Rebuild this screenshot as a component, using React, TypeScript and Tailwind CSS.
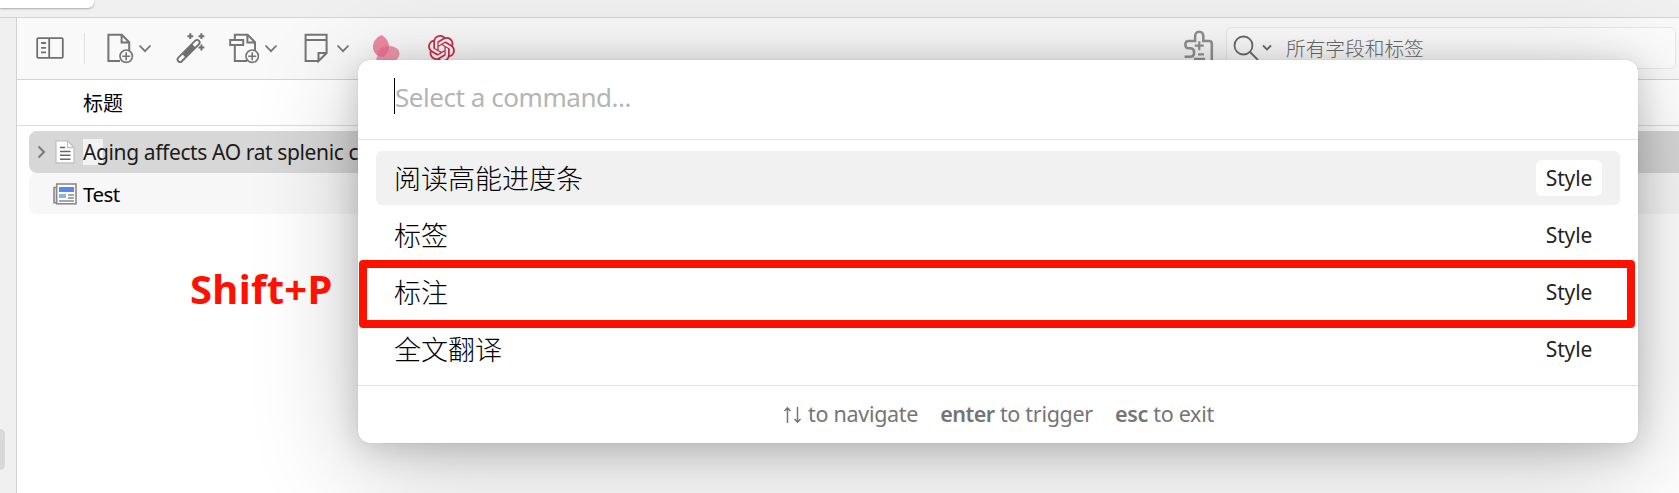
import React from "react";
import { SiOpenai } from "react-icons/si";

const Chevron = ({ className }: { className: string }) => (
  <svg className={className} width="14" height="32" viewBox="0 0 14 32" fill="none" stroke="#757575" strokeWidth="1.8">
    <path d="M1.5 12.5 7 18.2l5.5-5.7" />
  </svg>
);

const PlusBadge = ({ cx, cy }: { cx: number; cy: number }) => (
  <g strokeWidth="1.6">
    <circle cx={cx} cy={cy} r="6.2" fill="#f9f9f9" />
    <path d={`M${cx - 4} ${cy}h8M${cx} ${cy - 4}v8`} />
  </g>
);

const SidebarIcon = () => (
  <svg className="ml-[19px]" width="28" height="32" viewBox="0 0 28 32" fill="none" stroke="#707070" strokeWidth="1.8">
    <rect x="1.2" y="5.2" width="25.6" height="19.6" rx="1" />
    <path d="M13.2 5.5v19M5 10h5M5 14.8h5M5 19.4h5" />
  </svg>
);

const NewItemIcon = () => (
  <svg className="ml-[22px]" width="28" height="32" viewBox="0 0 28 32" fill="none" stroke="#757575" strokeWidth="2">
    <path d="M13 28H1.4V1.8h13.4l7.4 7.4V20M14.6 2v7.4h7.6" />
    <PlusBadge cx={19.2} cy={23.2} />
  </svg>
);

const WandIcon = () => (
  <svg className="ml-[24px]" width="32" height="32" viewBox="0 0 32 32" fill="none" stroke="#707070">
    <g transform="rotate(-45 12.5 18.2)">
      <rect x="-1.8" y="15.6" width="29" height="5" rx="2.5" strokeWidth="1.8" fill="#fafafa" />
      <rect x="6" y="15.6" width="14" height="5" fill="#707070" stroke="none" />
    </g>
    <path strokeWidth="2" d="M14.3 .3v5.8M11.4 3.2h5.8M25.4 .3v5.8M22.5 3.2h5.8M25.4 11.6v5.8M22.5 14.5h5.8" />
  </svg>
);

const AttachIcon = () => (
  <svg className="ml-[21px]" width="32" height="32" viewBox="0 0 32 32" fill="none" stroke="#757575" strokeWidth="2">
    <path d="M5.8 7V1.8h12.8l7.4 7.4V20M18.4 2v7.4H26M18 28H5.8V12.4" />
    <rect x="1.2" y="7" width="13" height="5" />
    <PlusBadge cx={23.2} cy={23.2} />
  </svg>
);

const NoteIcon = () => (
  <svg className="ml-[26px]" width="26" height="32" viewBox="0 0 26 32" fill="none" stroke="#757575" strokeWidth="2">
    <path d="M14.5 28H1.6V1.8h21V20L14.5 28v-8h8M1.6 7h21" />
  </svg>
);

const ButterflyIcon = () => (
  <svg className="ml-[22px]" width="30" height="32" viewBox="0 0 30 32" fill="#ee6f90">
    <path fillOpacity=".8" d="M9.500 2c5 3 8 8 7.500 13-.5 5-4 9-7 9-4 0-8.500-4-9-9C.5 9 4.500 4 9.500 2Z" />
    <path fillOpacity=".7" d="M6 18c3-4 7-5.500 12-5 6 .6 10 4 9.500 8C27 26 22 30 15 30c-6 0-9-2-11-4 2-2 1.500-5 2-8Z" />
  </svg>
);

const PuzzleIcon = () => (
  <svg width="32" height="34" viewBox="0 0 32 34" fill="none" stroke="#929292" strokeWidth="2.600">
    <path d="M0 26.700h5.500c2.500 0 4-1.700 4-4.200s-1.500-4.200-4-4.200H4c-2 0-3.200-1.200-3.200-3.200v-1C.800 12 2 11 4 11h6.500V6.500C10.500 3.500 12 1.800 14.500 1.800s4.200 1.700 4.200 4.700V11h5.800c1.700 0 2.700 1 2.700 2.700V34" transform="translate(.6 0)" />
    <path strokeWidth="2.200" d="M10.800 15.600h9M15.300 11.200v9M14 24.300h6M10 28.800h11" />
  </svg>
);

const commands = [
  { name: "阅读高能进度条", tag: "Style", active: true },
  { name: "标签", tag: "Style", active: false },
  { name: "标注", tag: "Style", active: false },
  { name: "全文翻译", tag: "Style", active: false },
];

function Toolbar() {
  return (
    <div className="flex h-[62px] shrink-0 items-start border-b border-[#d2d2d2] bg-[#f9f9f9] pt-[15px]">
      <SidebarIcon />
      <div className="ml-[20px] h-[31px] w-px bg-[#e2e2e2]" />
      <NewItemIcon />
      <Chevron className="ml-[3px]" />
      <WandIcon />
      <AttachIcon />
      <Chevron className="ml-[3px]" />
      <NoteIcon />
      <Chevron className="ml-[6px]" />
      <ButterflyIcon />
      <SiOpenai className="mt-[2px] ml-[26px] text-[#c9304a]" size={27} />
      <div className="-mt-[3px] ml-auto">
        <PuzzleIcon />
      </div>
      <div className="-mt-[6px] mr-[3px] ml-[10px] flex h-[42px] w-[450px] items-start rounded-md border border-[#e8e8e8] bg-[#fcfcfc]">
        <svg className="mt-[7px] ml-[6px]" width="26" height="28" viewBox="0 0 26 28" fill="none" stroke="#6b6b6b" strokeWidth="1.8">
          <circle cx="10.500" cy="10.500" r="9" />
          <path d="m17 17 8 8" />
        </svg>
        <svg className="mt-[16px] ml-[3px]" width="10" height="8" viewBox="0 0 10 8" fill="none" stroke="#6b6b6b" strokeWidth="1.800">
          <path d="M1 1.500 5 5.500l4-4" />
        </svg>
        <span className="mt-[6px] ml-[14px] text-[19.700px] leading-[30px] font-light text-[#6a6a6a]">所有字段和标签</span>
      </div>
    </div>
  );
}

function Library() {
  return (
    <div className="flex min-w-0 flex-1 flex-col border-l border-[#d2d2d2] bg-white">
      <Toolbar />
      <div className="flex h-[46px] shrink-0 items-center border-b border-[#dcdcdc] pt-[2px] pl-[66px] text-[20px] text-black">标题</div>
      <div className="mt-[5px] ml-[12px] flex h-[42px] items-center rounded-l-lg bg-[#d7d7d7]">
        <svg className="ml-[8px]" width="10" height="14" viewBox="0 0 10 14" fill="none" stroke="#7a7a7a" strokeWidth="2">
          <path d="m1.500 1.500 5.500 5.500-5.500 5.500" />
        </svg>
        <svg className="ml-[8px]" width="20" height="24" viewBox="0 0 20 24" fill="none">
          <path d="M1 .8h11.500l6.500 6.500V23H1z" fill="#fff" stroke="#c2c2c2" strokeWidth="1.300" />
          <path d="M12.500 1v6.500H19" stroke="#c2c2c2" strokeWidth="1.300" />
          <path d="M5 7.500h5M5 11.500h10.500M5 15.300h10.500M5 19.200h10.500" stroke="#666" strokeWidth="1.600" />
        </svg>
        <span className="ml-[8px] bg-[linear-gradient(#f3f3f3,#f3f3f3)] bg-[length:20px_26px] bg-left bg-no-repeat text-[21px] leading-[28px] tracking-[-0.38px] whitespace-nowrap text-[#1c1c1c]">
          Aging affects AO rat splenic c
        </span>
      </div>
      <div className="ml-[12px] flex h-[41px] items-center rounded-l-lg bg-[#f7f7f7]">
        <svg className="ml-[24px]" width="24" height="22" viewBox="0 0 24 22" fill="none">
          <path d="M3.500 4.500H1v15.300h3" fill="#ddd" stroke="#8a8a8a" strokeWidth="1.600" />
          <rect x="3.700" y="1" width="19.300" height="19.800" fill="#fff" stroke="#8a8a8a" strokeWidth="1.600" />
          <path d="M6 4h15v5H6z" fill="#5b86ec" />
          <path d="M6 11h7v4H6z" fill="#7fb6f8" />
          <path d="M15 12h6M15 15h6M6 18h15" stroke="#8a8a8a" strokeWidth="1.500" />
        </svg>
        <span className="ml-[6px] pt-[1px] text-[20.500px] tracking-[-0.5px] text-black">Test</span>
      </div>
    </div>
  );
}

function CommandPalette() {
  return (
    <div className="absolute top-[60px] left-[358px] flex h-[383px] w-[1280px] flex-col rounded-[12px] bg-white shadow-[0_0_1px_rgba(0,0,0,0.25),0_5px_32px_rgba(0,0,0,0.16),0_22px_105px_rgba(0,0,0,0.24)]">
      <div className="flex h-[80px] shrink-0 items-start border-b border-[#e2e2e2] pt-[18px] pl-[36px]">
        <div className="h-[36px] w-px bg-black" />
        <span className="text-[26px] leading-[38px] tracking-[-0.45px] text-[#b4b4b4]">Select a command...</span>
      </div>
      <div className="flex h-[245px] shrink-0 flex-col gap-[3px] px-[18px] pt-[11px]">
        {commands.map((c) => (
          <div
            key={c.name}
            className={`flex h-[54px] shrink-0 items-center justify-between rounded-md pr-[18px] pl-[18px] ${c.active ? "bg-[#f1f1f1]" : ""}`}
          >
            <span className="pt-[2px] text-[27px] leading-[40px] font-light text-black">{c.name}</span>
            <span className={`flex h-[36px] w-[66px] items-center justify-center rounded-md pt-[2px] text-[21px] tracking-[-0.1px] text-[#222] ${c.active ? "bg-white" : ""}`}>
              {c.tag}
            </span>
          </div>
        ))}
      </div>
      <div className="flex flex-1 items-center justify-center gap-[22px] border-t border-[#e2e2e2] pl-px text-[21.500px] tracking-[-0.3px] text-[#757575]">
        <span className="flex items-center gap-[5px]">
          <svg width="20" height="18" viewBox="0 0 20 18" fill="none" stroke="#757575" strokeWidth="1.500">
            <path d="M4.500 17V2M1.500 5l3-3.200L7.500 5M14.500 1v15M11.500 13l3 3.200 3-3.200" />
          </svg>
          to navigate
        </span>
        <span>
          <b className="font-semibold tracking-[-0.5px]">enter</b> to trigger
        </span>
        <span>
          <b className="font-semibold">esc</b> to exit
        </span>
      </div>
    </div>
  );
}

export default function App() {
  return (
    <div className="relative flex h-[493px] w-[1679px] flex-col overflow-hidden bg-[#f0f0f0] font-['Noto_Sans','Noto_Sans_CJK_SC',sans-serif]">
      <div className="h-[18px] shrink-0 border-b border-[#d2d2d2]">
        <div className="h-[8px] w-[94px] rounded-br-md bg-white shadow-[0_1px_2px_rgba(0,0,0,0.3)]" />
      </div>
      <div className="flex min-h-0 flex-1">
        <div className="w-[16px] shrink-0 pt-[411px]">
          <div className="h-[41px] w-[5px] rounded-r-[5px] bg-[#d8d8d8]" />
        </div>
        <Library />
      </div>
      <CommandPalette />
      <div className="absolute top-[260px] left-[359px] h-[68px] w-[1276px] rounded border-8 border-[#ff1100]" />
      <div className="absolute top-[261px] left-[190px] text-[40px] leading-[56px] font-bold tracking-[0.3px] whitespace-nowrap text-[#ff1100]">Shift+P</div>
    </div>
  );
}
